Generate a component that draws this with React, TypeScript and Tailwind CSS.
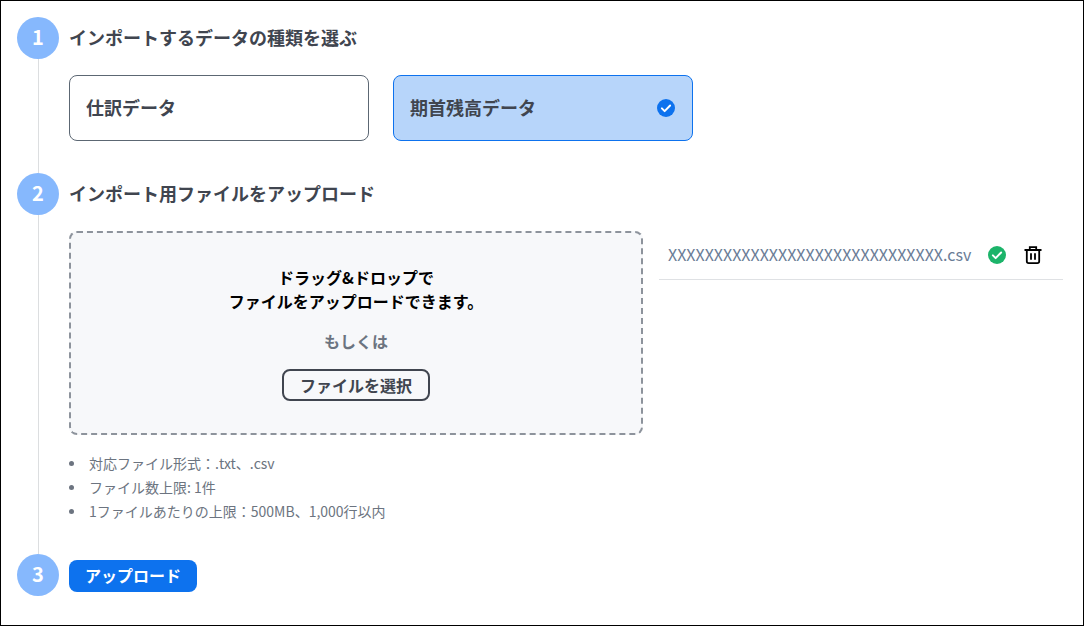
import React from "react";

function StepBadge({ n, line = true }: { n: number; line?: boolean }) {
  return (
    <div className="flex w-[42px] shrink-0 flex-col items-center">
      <div className="flex h-[42px] w-[42px] shrink-0 items-center justify-center rounded-full bg-[#86b8fd] pb-[2px] text-[20px] font-bold text-white">
        {n}
      </div>
      {line && <div className="w-[1px] flex-1 bg-[#dcdee0]"></div>}
    </div>
  );
}

function CheckCircle({ className }: { className: string }) {
  return (
    <svg className={className} viewBox="0 0 24 24" fill="currentColor">
      <circle cx="12" cy="12" r="12" />
      <path
        d="M6.5 12.5l3.7 3.7 7.3-7.6"
        fill="none"
        stroke="#fff"
        strokeWidth="2.6"
        strokeLinecap="round"
        strokeLinejoin="round"
      />
    </svg>
  );
}

const notes = [
  "対応ファイル形式：.txt、.csv",
  "ファイル数上限: 1件",
  "1ファイルあたりの上限：500MB、1,000行以内",
];

export default function App() {
  return (
    <div className="h-[626px] w-[1084px] border border-black bg-white pt-4 pl-4 font-['Noto_Sans_CJK_JP','Noto_Sans',sans-serif] text-[#40454f]">
      {/* Step 1 */}
      <div className="flex gap-[10px]">
        <StepBadge n={1} />
        <div className="pb-8">
          <h2 className="flex h-[42px] items-center pb-[2px] text-[18px] font-bold">
            インポートするデータの種類を選ぶ
          </h2>
          <div className="mt-4 flex gap-6">
            <div className="flex h-[66px] w-[300px] items-center rounded-lg border border-[#5c6773] bg-white px-4 pb-[2px] text-[18px] font-bold">
              仕訳データ
            </div>
            <div className="flex h-[66px] w-[300px] items-center justify-between rounded-lg border border-[#0d72ee] bg-[#b7d5fa] px-4 text-[18px] font-bold">
              <span className="pb-[2px]">期首残高データ</span>
              <CheckCircle className="mr-[1px] h-[18px] w-[18px] text-[#0d72ee]" />
            </div>
          </div>
        </div>
      </div>

      {/* Step 2 */}
      <div className="flex gap-[10px]">
        <StepBadge n={2} />
        <div className="pb-[31px]">
          <h2 className="flex h-[42px] items-center pb-[2px] text-[18px] font-bold">
            インポート用ファイルをアップロード
          </h2>
          <div className="mt-4 flex gap-4">
            <div className="flex h-[204px] w-[574px] flex-col items-center rounded-lg border-2 border-dashed border-[#8d939c] bg-[#f7f8fa] pt-[32px]">
              <p className="text-center text-[16px] leading-[24px] font-bold text-black">
                ドラッグ&ドロップで
                <br />
                ファイルをアップロードできます。
              </p>
              <p className="mt-[16px] text-[16px] leading-[24px] font-bold text-[#6c7480]">
                もしくは
              </p>
              <button className="mt-[16px] flex h-[32px] w-[148px] items-center justify-center rounded-lg border-2 border-[#40454f] text-[16px] font-bold">
                ファイルを選択
              </button>
            </div>
            <div className="flex h-[49px] w-[404px] items-center border-b border-[#dfe1e4] pl-[9px]">
              <span className="w-[303px] pb-[2px] text-[16px] whitespace-nowrap text-[#6a7c96]">
                XXXXXXXXXXXXXXXXXXXXXXXXXXXXXX.csv
              </span>
              <CheckCircle className="ml-[17px] h-[18px] w-[18px] text-[#1cb46a]" />
              <svg
                className="ml-[18px] h-[18px] w-[18px] text-black"
                viewBox="0 0 18 18"
                fill="none"
                stroke="currentColor"
                strokeWidth="1.8"
              >
                <path d="M0.5 4h17M5.8 4V1.2h6.4V4M2.8 4v11.2a1.9 1.9 0 0 0 1.9 1.9h8.6a1.9 1.9 0 0 0 1.9-1.9V4M7 7.2v6.6M11 7.2v6.6" />
              </svg>
            </div>
          </div>
          <ul className="mt-[16px] text-[14px] leading-[24px] text-[#6c7480]">
            {notes.map((note) => (
              <li key={note} className="flex items-center">
                <span className="mt-[1px] mr-[15px] h-[5px] w-[5px] shrink-0 rounded-full bg-[#6c7480]"></span>
                {note}
              </li>
            ))}
          </ul>
        </div>
      </div>

      {/* Step 3 */}
      <div className="flex gap-[10px]">
        <StepBadge n={3} line={false} />
        <div className="flex h-[44px] items-center">
          <button className="h-[32px] w-[128px] rounded-lg bg-[#0d72ee] pb-[2px] text-[16px] font-bold text-white">
            アップロード
          </button>
        </div>
      </div>
    </div>
  );
}
